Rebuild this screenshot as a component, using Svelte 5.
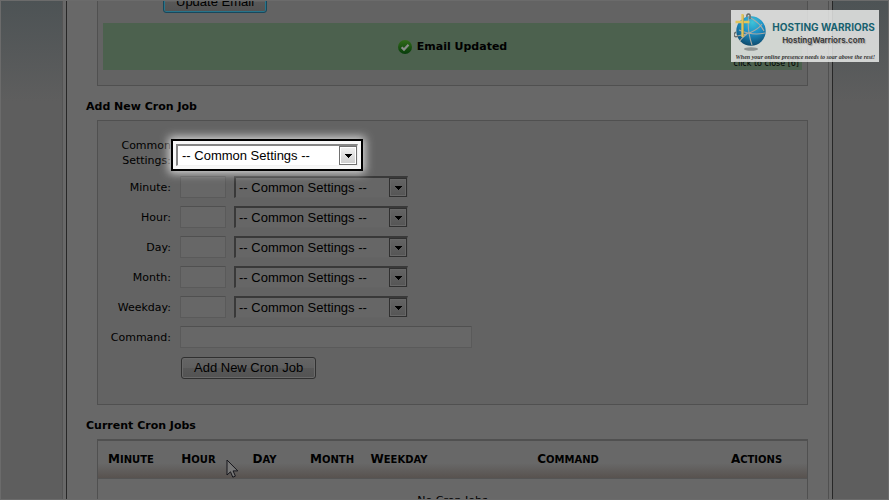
<script>
  const fields = ['Minute', 'Hour', 'Day', 'Month', 'Weekday'];
  const columns = [
    ['Minute', 66], ['Hour', 69], ['Day', 63], ['Month', 72],
    ['Weekday', 62], ['Command', 0], ['Actions', 101]
  ];
</script>

{#snippet picker(id, label, active)}
  <span class="picker" class:active>
    <select {id} aria-label={label}><option>-- Common Settings --</option></select>
    <span class="arrow" aria-hidden="true">
      <svg width="7" height="4" viewBox="0 0 7 4"><path d="M0 0h7v1h-1v1h-1v1h-1v1h-1v-1h-1v-1h-1v-1h-1z" /></svg>
    </span>
  </span>
{/snippet}

<div class="page">
  <div class="side left"></div>
  <main>
    <section class="panel email">
      <button type="button" class="update">Update Email</button>
      <div class="notice">
        <svg class="tick" width="14" height="14" viewBox="0 0 14 14">
          <defs><linearGradient id="tickFill" x2="0" y2="1"><stop stop-color="#326b18" /><stop offset="1" stop-color="#063c0b" /></linearGradient></defs>
          <circle cx="7" cy="7" r="7" fill="url(#tickFill)" />
          <path d="M3.6 7.2 6 9.6 10.5 4.8" fill="none" stroke="#898c87" stroke-width="2.2" />
        </svg>
        <strong>Email Updated</strong>
        <a href="#close">click to close [6]</a>
      </div>
    </section>

    <h2>Add New Cron Job</h2>
    <form class="panel cron" onsubmit={(e) => e.preventDefault()}>
      <div class="row common">
        <label for="common">Common Settings:</label>
        {@render picker('common', 'Common Settings', true)}
      </div>
      {#each fields as field}
        <div class="row">
          <label for={field}>{field}:</label>
          <input id={field} type="text" class="short" />
          {@render picker(field + '-preset', field + ' preset', false)}
        </div>
      {/each}
      <div class="row">
        <label for="command">Command:</label>
        <input id="command" type="text" class="long" />
      </div>
      <button type="submit">Add New Cron Job</button>
    </form>

    <h2>Current Cron Jobs</h2>
    <table>
      <colgroup>
        {#each columns as [, width]}<col style:width={width ? width + 'px' : 'auto'} />{/each}
      </colgroup>
      <thead><tr>{#each columns as [name]}<th>{name}</th>{/each}</tr></thead>
      <tbody><tr><td colspan="7">No Cron Jobs</td></tr></tbody>
    </table>
  </main>
  <div class="side right"></div>

  <svg class="cursor" width="13" height="20" viewBox="0 0 13 20">
    <path d="M1 1v15l3.5-3.2 2.3 5.4 2.6-1.1-2.3-5.2h4.7z" fill="#777" stroke="#16161c" />
  </svg>

  <aside class="brand">
    <svg width="34" height="40" viewBox="0 0 34 40">
      <defs>
        <radialGradient id="globe" cx=".55" cy=".2" r=".85"><stop stop-color="#3fc3d8" /><stop offset=".45" stop-color="#1c8fc6" /><stop offset="1" stop-color="#0d4464" /></radialGradient>
      </defs>
      <ellipse cx="17" cy="37" rx="7" ry="1.8" fill="#8f9492" />
      <circle cx="17" cy="19" r="14.7" fill="url(#globe)" />
      <g fill="none" stroke="#a9aaa5" stroke-width="1.1">
        <path d="M15 5C13 15 16 27 18 33M3 24c9-1 20-5 25-12M5 18c9 4 18 5 26 3M15 5c6 3 12 8 15 14M13 22c-4 3-6 5-7 7" />
      </g>
      <path d="M13 5c-1-4 4-4 3 0v2M2 20c-4 3-1 6 2 4" fill="none" stroke="#666b69" stroke-width="1.5" />
      <path d="M8.5 2v23M1.5 10h14" stroke="#e0c45c" stroke-width="2.3" />
      <path d="M9.5 3v21" stroke="#af963d" stroke-width=".5" />
    </svg>
    <div class="words">
      <strong>HOSTING WARRIORS</strong>
      <span>HostingWarriors.com</span>
    </div>
    <em>When your online presence needs to soar above the rest!</em>
  </aside>
</div>

<style>
  :global(body) { margin: 0; background: #686868; }
  * { box-sizing: border-box; }
  .page {
    position: relative; display: flex; height: 100vh; overflow: hidden;
    border: 1px solid #6b6b6b; background: #686868; color: #000;
    font: 11px/15px "DejaVu Sans", Verdana, sans-serif;
  }
  .side { flex: none; background: linear-gradient(#4d5355, #5e5e5e 100px); }
  .left { width: 62px; border-right: 1px solid #555; }
  .right { width: 55px; }
  main {
    flex: 1; min-width: 0; margin-left: 3px; padding: 0 24px 0 30px;
    border-left: 1px solid #272727; border-right: 1px solid #272727;
    box-shadow: inset -3px 0 #686868, inset -4px 0 #505050;
  }
  .panel { border: 1px solid #505050; background: #636363; }
  .email { display: flow-root; height: 85px; padding: 0 5px; border-top: 0; }
  button {
    display: block; height: 22px; padding: 0 12px; border: 1px solid #303030; border-radius: 3px;
    background: linear-gradient(#656565, #606060 50%, #585858 50%, #535353);
    box-shadow: inset 0 0 0 1px #696969; color: #000; font: 13px/18px "Liberation Sans", Arial, sans-serif;
  }
  .email .update {
    margin: -10px 0 10px 60px; border-color: #18475b;
    box-shadow: inset 0 0 0 1px #28748a;
  }
  .notice {
    position: relative; display: flex; align-items: center; justify-content: center; gap: 5px;
    height: 47px; background: #4c614e;
  }
  .notice a { position: absolute; right: 3px; bottom: 0; color: #000; font-size: 8px; line-height: 12px; text-decoration: none; }
  .tick { flex: none; }
  h2 { margin: 13px 0 6px -11px; font-size: 11px; line-height: 15px; }
  .cron { height: 285px; padding: 17px 0; }
  .row { display: flex; align-items: center; height: 30px; }
  .common { margin-bottom: 4px; }
  label { flex: none; width: 74px; padding-right: 1px; margin-right: 8px; text-align: right; }
  input { height: 22px; border: 1px solid #5a5a5a; border-top-color: #505050; border-radius: 1px; background: #676767; padding: 0 4px; outline: 0; }
  .short { width: 46px; margin-right: 8px; }
  .long { width: 292px; }
  .picker {
    position: relative; display: block; width: 174px; height: 22px;
    border: 2px solid #393939; border-right: 1px solid #5e5e5e; border-bottom: 1px solid #646464;
    background: #666;
  }
  select {
    display: block; width: 100%; height: 100%; padding: 0 3px; border: 0; outline: 0; appearance: none;
    background: transparent; color: #000; font: 13px/18px "Liberation Sans", Arial, sans-serif;
  }
  .arrow {
    position: absolute; top: 0; right: 0; display: grid; place-items: center; width: 18px; height: 19px;
    border: 1px solid #303030; background: linear-gradient(#646464, #555);
    box-shadow: inset 0 0 0 1px #676767; pointer-events: none;
  }
  .active {
    z-index: 1; width: 182px; margin: 4px 0 0 -4px; border-color: #858585 #eee #f3f3f3 #858585;
    background: #fff; box-shadow: 0 0 0 3px #f8f8f8, 0 0 0 5px #000, 0 0 9px 7px #ddd;
  }
  .active select { padding-left: 4px; }
  .active .arrow { border-color: #707070; background: linear-gradient(#f2f2f2, #ccc); box-shadow: inset 0 0 0 1px #fff; }
  .cron button { margin: 5px 0 0 83px; }
  table { width: 100%; border-collapse: separate; border-spacing: 0; table-layout: fixed; border: 1px solid #505050; border-top-width: 2px; border-bottom: 0; }
  th {
    height: 38px; padding: 0; border-bottom: 1px solid #555; text-align: center;
    background: linear-gradient(#686868 60%, #58524f);
    font-size: 10px; line-height: 15px; text-transform: uppercase;
  }
  th::first-letter { font-size: 12px; }
  td { height: 42px; padding: 0; text-align: center; }
  .cursor { position: absolute; left: 225px; top: 458px; }
  .brand {
    position: absolute; top: 9px; right: 9px; display: grid; grid-template-columns: 34px 1fr;
    grid-template-rows: 43px 9px; column-gap: 4px; width: 148px; height: 52px; padding: 0 4px 0 3px;
    background: rgba(238, 239, 238, .82); white-space: nowrap;
  }
  .brand svg { margin-top: 2px; }
  .words { display: flex; flex-direction: column; align-items: center; padding-top: 11px; }
  .words strong { color: #18616f; font: 700 10px/13px Inter, sans-serif; }
  .words span { color: #333; font: 600 8px/13px Inter, sans-serif; text-shadow: 1px 1px 1px #999; }
  .brand em { grid-column: 1 / 3; color: #333; text-align: right; font: italic bold 6px/8px "Liberation Serif", serif; }
</style>
